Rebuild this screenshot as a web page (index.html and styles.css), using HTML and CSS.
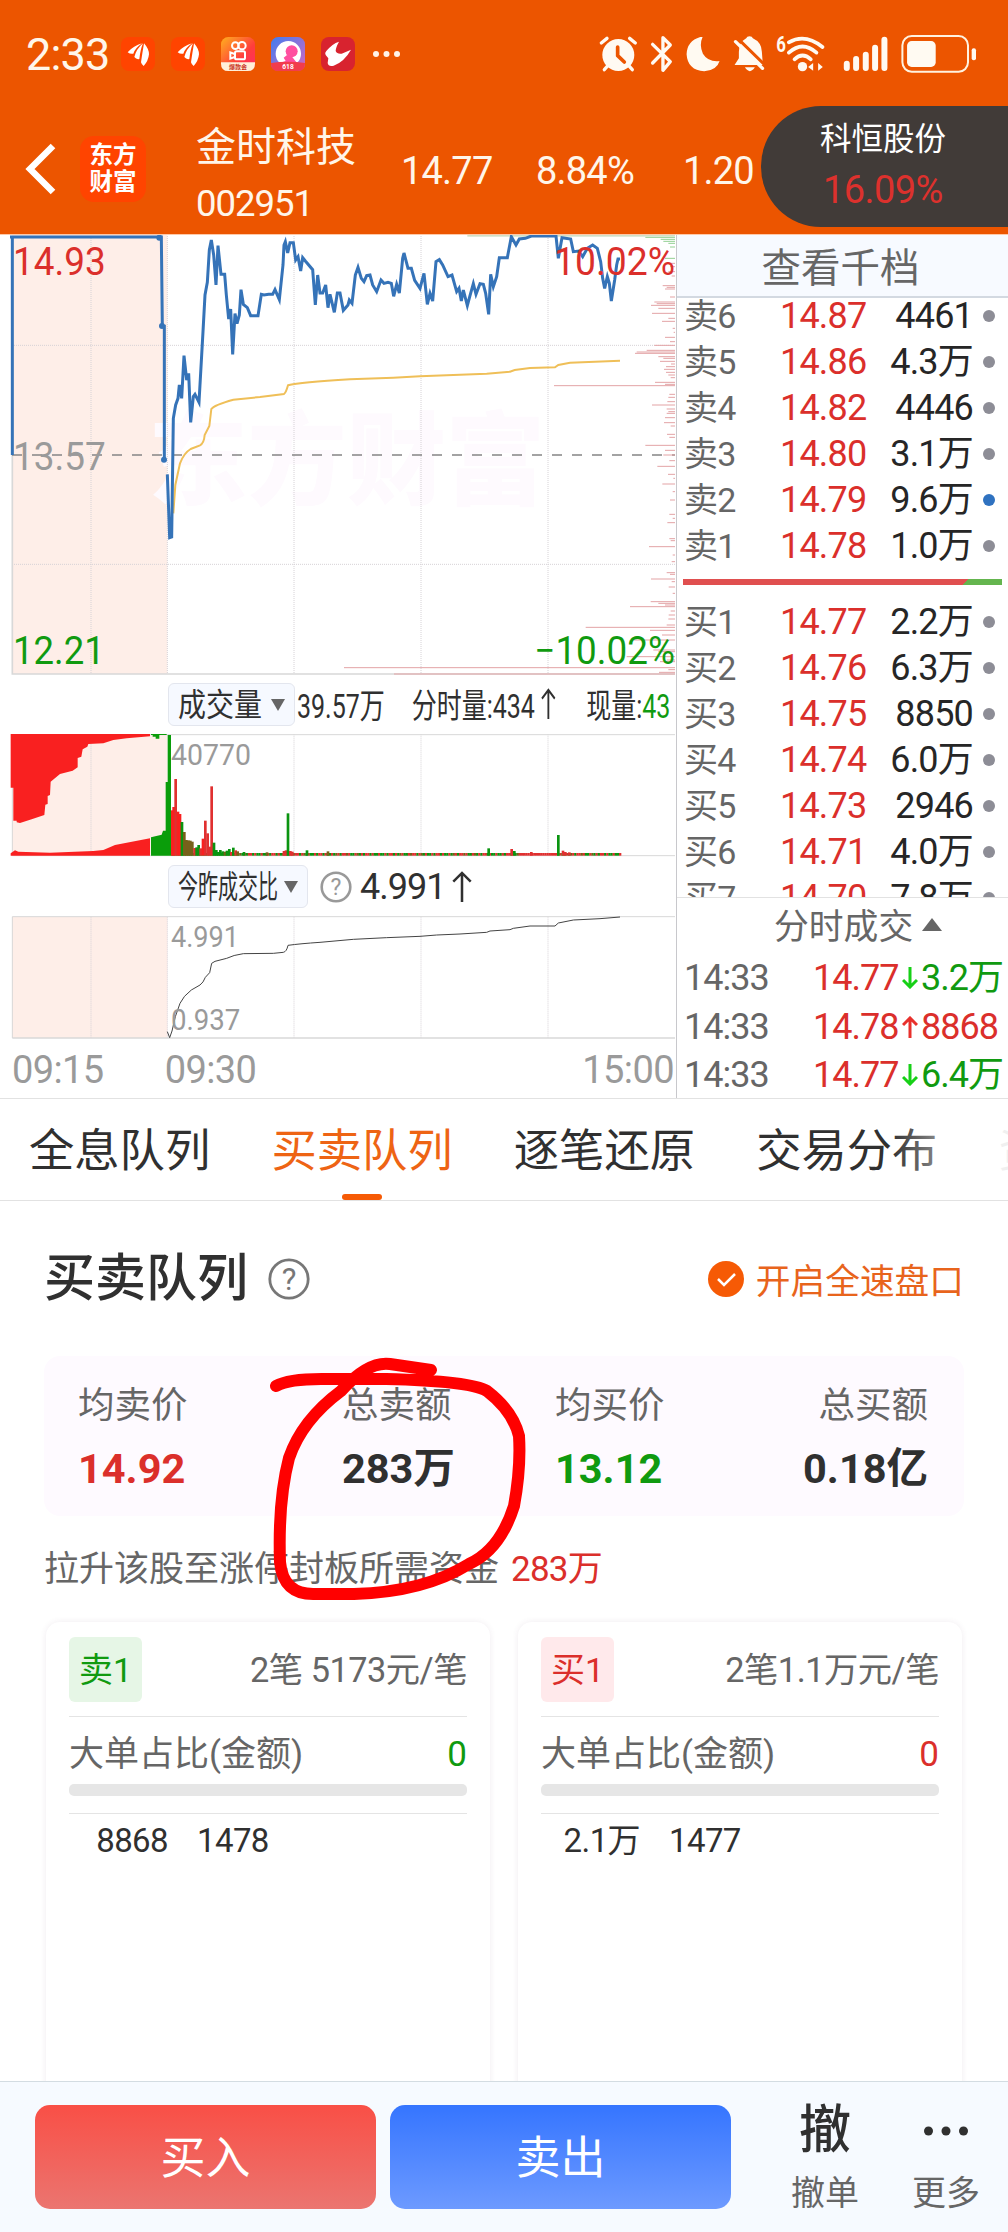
FILE: index.html
```html
<!DOCTYPE html>
<html lang="zh-CN">
<head>
    <meta charset="UTF-8">
    <meta name="viewport" content="width=device-width, initial-scale=1.0">
    <title>金时科技 002951</title>
    <link rel="stylesheet" href="styles.css">
</head>
<body>
    <header class="header">
        <div class="status-bar">
            <span class="clock">2:33</span>
            <div class="notices">
                <svg class="app-icon" viewBox="0 0 102 102"><rect width="102" height="102" rx="24" fill="#ff4400"/><path fill="#fff" d="M20 46Q38 26 63 19Q42 34 37 50Q28 52 20 46ZM40 60Q46 36 66 19Q58 38 55 66Q46 68 40 60ZM60 76Q64 48 69 19Q84 36 84 52Q82 72 68 87Q62 83 60 76Z"/></svg>
                <svg class="app-icon" viewBox="0 0 102 102"><rect width="102" height="102" rx="24" fill="#ff4400"/><path fill="#fff" d="M20 46Q38 26 63 19Q42 34 37 50Q28 52 20 46ZM40 60Q46 36 66 19Q58 38 55 66Q46 68 40 60ZM60 76Q64 48 69 19Q84 36 84 52Q82 72 68 87Q62 83 60 76Z"/></svg>
                <svg class="app-icon" viewBox="0 0 102 102">
                    <defs><linearGradient id="ks" x1="0" y1="0" x2="1" y2="1"><stop offset="0" stop-color="#ffb01e"/><stop offset=".6" stop-color="#ff3d3d"/><stop offset="1" stop-color="#ff2a6a"/></linearGradient></defs>
                    <rect width="102" height="102" rx="22" fill="url(#ks)"/>
                    <g fill="none" stroke="#fff" stroke-width="6"><circle cx="43" cy="26" r="10"/><circle cx="63" cy="26" r="11"/><rect x="42" y="43" width="30" height="24" rx="5"/><path d="M41 51L28 46V65L41 60"/></g>
                    <path fill="#fff0d8" d="M0 76H102V80Q102 102 80 102H22Q0 102 0 80Z"/>
                    <text x="51" y="96" font-size="18" font-weight="700" text-anchor="middle" fill="#c8321e">爆款会</text>
                </svg>
                <svg class="app-icon" viewBox="0 0 102 102">
                    <defs><linearGradient id="mm" x1="0" y1="0" x2="1" y2="1"><stop offset="0" stop-color="#3f7df0"/><stop offset="1" stop-color="#d667c0"/></linearGradient></defs>
                    <rect width="102" height="102" rx="22" fill="url(#mm)"/>
                    <circle cx="52" cy="50" r="38" fill="#fff"/>
                    <circle cx="62" cy="43" r="18" fill="#ff4fa0"/><path fill="#ff4fa0" d="M48 54L38 62L44 72L26 78H78L62 58Z"/>
                    <path fill="#f23c4c" d="M0 78Q50 70 102 78V80Q102 102 80 102H22Q0 102 0 80Z"/>
                    <text x="51" y="97" font-size="20" font-weight="700" text-anchor="middle" fill="#fff">618</text>
                </svg>
                <svg class="app-icon" viewBox="0 0 102 102"><rect width="102" height="102" rx="24" fill="#d8232f"/><path fill="#fff" d="M54 14Q34 20 16 42Q10 48 14 54L22 64L20 78Q22 90 38 86Q70 74 90 38L62 50Q48 52 44 42Q44 32 54 14Z"/></svg>
                <svg class="more-dots" viewBox="0 0 27 6"><g fill="#fff3e8"><circle cx="3" cy="3" r="3"/><circle cx="13.5" cy="3" r="3"/><circle cx="24" cy="3" r="3"/></g></svg>
            </div>
            <svg class="sys-icons" viewBox="280 93 1150 135">
                <g fill="#fffaf2" stroke-linecap="round" stroke-linejoin="round">
                    <!-- alarm -->
                    <circle cx="344" cy="162" r="48"/>
                    <path fill="none" stroke="#fffaf2" stroke-width="10" d="M293 126L310 112M395 126L378 112M312 195L302 206M376 195L386 206"/>
                    <path fill="none" stroke="#ec5500" stroke-width="11" d="M342 138V164L362 183"/>
                    <!-- bluetooth -->
                    <path fill="none" stroke="#fffaf2" stroke-width="10" d="M447 130L500 182L478 208V110L500 132L447 186"/>
                    <!-- moon -->
                    <path d="M590 108Q550 120 549 160Q552 208 602 211Q640 208 648 180Q614 184 598 158Q586 132 597 108Z"/>
                    <!-- muted bell -->
                    <path d="M738 106Q746 106 748 112Q774 124 775 152L778 192H693L706 172V152Q706 124 728 112Q730 106 738 106ZM724 199H754Q739 222 724 199Z"/>
                    <path fill="none" stroke="#ec5500" stroke-width="9" d="M700 110L786 194"/>
                    <path fill="none" stroke="#fffaf2" stroke-width="10" d="M696 122L777 202"/>
                    <!-- wifi -->
                    <g fill="none" stroke="#fffaf2" stroke-width="11"><path d="M856 124Q905 96 957 138"/><path d="M856 155Q897 118 939 155"/><path d="M873 175Q897 152 922 175"/></g>
                    <circle cx="897" cy="197" r="14"/>
                    <path d="M929 186V209L914 198ZM944 186V209L958 198Z"/>
                    <text x="818" y="152" font-size="66" font-weight="700" textLength="29" lengthAdjust="spacingAndGlyphs">6</text>
                    <!-- signal -->
                    <g fill="none" stroke="#fffaf2" stroke-width="18"><path d="M1030 188V201M1058 174V201M1087 161V201M1115 140V201M1143 116V201"/></g>
                    <!-- battery -->
                    <rect x="1197" y="105" width="197" height="107" rx="28" fill="none" stroke="#fff3e0" stroke-width="6"/>
                    <rect x="1211" y="120" width="86" height="78" rx="14"/>
                    <rect x="1405" y="142" width="13" height="36" rx="6"/>
                </g>
            </svg>
        </div>
        <div class="nav">
            <svg class="back" viewBox="0 0 32 54"><path d="M28 4L5 27L28 50"/></svg>
            <div class="logo"><span>东方</span><span>财富</span></div>
            <div class="stock">
                <div class="stock-name">金时科技</div>
                <div class="stock-code">002951</div>
            </div>
            <span class="quote price">14.77</span>
            <span class="quote percent">8.84%</span>
            <span class="quote change">1.20</span>
        </div>
        <div class="float-pill">
            <div class="pill-name">科恒股份</div>
            <div class="pill-value">16.09%</div>
        </div>
    </header>

    <main>
        <section class="market">
            <div class="charts">
                <svg class="chart-price" viewBox="0 30 2028 1320">
                    <rect x="36" y="30" width="466" height="1317" fill="#feeee8"/>
                    <text class="watermark" x="445" y="815" textLength="1190" lengthAdjust="spacingAndGlyphs">东方财富</text>
                    <path class="grid" d="M36 361H2025M36 1018H2025M273 33V1345M502 33V1345M882 33V1345M1263 33V1345M1644 33V1345"/>
                    <path class="frame" d="M37 33V1347H2025"/>
                    <path class="zero" d="M36 690H2025"/>
                    <g id="depth"></g>
                    <path class="avg" d="M520 865L526 780L540 715Q552 684 572 672L600 661Q612 655 614 630L628 603L634 552Q642 540 700 524L780 516L852 507Q858 503 864 481Q900 472 1050 463L1180 458L1260 454L1460 446L1530 440L1544 435L1590 429L1665 427L1675 420L1710 413L1860 407"/>
                    <path class="line" d="M30 36H484L487 304L493 304V704M37 36V690"/>
                    <circle cx="478" cy="38" r="9" class="dot"/><circle cx="486" cy="303" r="9" class="dot"/><circle cx="492" cy="704" r="9" class="dot"/>
                    <path class="line" d="M502 748L509 938L515 936L520 580L527 540L534 520L538 480L545 520L552 392L560 465L566 445L572 592L580 515L585 508L597 532L609 320L615 210L622 172L628 75L634 45L641 90L648 180L654 62L663 148H674L679 210L686 282L692 252L698 388L705 266L711 296L718 270L723 194L730 238L742 248L752 272H774L784 208L792 210L806 208L818 208L825 194L838 224L849 120L852 60L856 50L863 84L870 53H880L887 105L894 95L902 138L908 98L916 108L938 134L946 240L953 150L960 204L968 204L977 180L984 248L990 208L1003 262L1012 204H1020L1030 256L1044 240L1048 225L1056 235L1066 150L1074 127L1084 160L1092 170L1100 152L1110 150L1118 180L1130 200L1143 165L1152 175L1164 172L1174 175L1181 214L1190 178L1198 204L1208 100L1212 84L1224 130H1234L1244 166L1260 190L1272 145L1282 238L1290 205L1298 228L1308 110L1318 104L1328 120L1344 155L1356 150L1370 200L1377 190L1384 228L1390 195L1402 242L1410 212L1420 176L1428 208L1440 176L1450 178L1457 205L1466 268L1472 148L1480 185L1490 155L1498 98H1522L1534 35L1548 60L1558 42L1576 40L1594 33H1668L1675 100L1686 38L1712 42L1720 80L1736 78L1748 95L1762 70L1778 60L1792 70L1802 110L1808 160L1814 190L1822 155L1828 175L1834 228L1844 165L1850 120L1854 102L1860 102"/>
                    <text class="c-red big" x="39" y="150" textLength="278" lengthAdjust="spacingAndGlyphs">14.93</text>
                    <text class="c-grey big" x="39" y="735" textLength="278" lengthAdjust="spacingAndGlyphs">13.57</text>
                    <text class="c-green big" x="39" y="1317" textLength="275" lengthAdjust="spacingAndGlyphs">12.21</text>
                    <text class="c-red big" x="1662" y="150" textLength="363" lengthAdjust="spacingAndGlyphs">10.02%</text>
                    <text class="c-green big" x="1603" y="1317" textLength="422" lengthAdjust="spacingAndGlyphs">−10.02%</text>
                </svg>

                <div class="toolbar volume-bar">
                    <span class="select"><span class="select-text wide">成交量</span><i class="caret-down"></i></span>
                    <div class="narrow">
                        <span class="vol-total">39.57万</span>
                        <span class="vol-minute">分时量:434<svg class="arrow-up" viewBox="0 0 20 32"><path d="M10 32V2M1 11L10 2L19 11"/></svg></span>
                        <span>现量:<b class="green">43</b></span>
                    </div>
                </div>

                <svg class="chart-sub" viewBox="0 192 2028 369">
                    <rect x="36" y="193" width="466" height="364" fill="#feeee8"/>
                    <path class="grid" d="M273 193V557M882 193V557M1263 193V557M1644 193V557"/>
                    <path class="frame thin" d="M37 557V194H2025M37 557H2025"/>
                    <path fill="#f92020" d="M32 192H450V199L380 205L340 210L310 220L265 222L262 230L248 238L244 260L233 264V292L218 302L180 312L152 335L150 375L143 378V402L136 404L133 435L95 448L60 459L50 457V452H40V353H32ZM32 557V550L45 541L55 545L150 548L280 543L310 540L345 525L450 505V557Z"/>
                    <path fill="#0a9d0a" d="M453 192H500V195H478V206H467V200H458V195H453ZM453 557V502L485 494L489 482H497V336H503V195H513V557Z"/>
                    <g id="volume"></g>
                    <text class="c-grey small" x="513" y="284" textLength="240" lengthAdjust="spacingAndGlyphs">40770</text>
                </svg>

                <div class="toolbar ratio-bar">
                    <span class="select ratio-select"><span class="select-text slim">今昨成交比</span><i class="caret-down"></i></span>
                    <svg class="help-small" viewBox="0 0 32 32"><circle cx="16" cy="16" r="14.3"/><text x="16" y="24" text-anchor="middle">?</text></svg>
                    <span class="ratio-value">4.991</span>
                    <svg class="arrow-up tall" viewBox="0 0 20 32"><path d="M10 32V2M1 11L10 2L19 11"/></svg>
                </div>

                <svg class="chart-sub" viewBox="0 738 2028 369">
                    <rect x="36" y="740" width="466" height="364" fill="#feeee8"/>
                    <path class="grid" d="M273 740V1103M502 740V1103M882 740V1103M1263 740V1103M1644 740V1103"/>
                    <path class="frame thin" d="M37 1104V740H2025"/>
                    <path class="frame" d="M37 1104H2025"/>
                    <path class="ratio" d="M502 1085L509 1103L516 1083L526 1040L540 1000Q550 978 574 960L600 945Q610 938 616 922L629 908L635 880L645 874L680 865Q700 855 730 851L820 850L850 847Q860 845 864 826Q900 821 960 817L1060 808L1160 803L1260 799L1310 795L1380 792L1460 787L1470 783L1530 779L1540 775L1590 768H1665L1675 759L1720 750L1800 746L1860 741"/>
                    <text class="c-grey small" x="513" y="830" textLength="204" lengthAdjust="spacingAndGlyphs">4.991</text>
                    <text class="c-grey small" x="513" y="1079" textLength="208" lengthAdjust="spacingAndGlyphs">0.937</text>
                </svg>

                <div class="time-axis"><span>09:15</span><span class="open">09:30</span><span class="close">15:00</span></div>
            </div>

            <div class="book">
                <div class="book-head">查看千档</div>
                <div class="book-list">
                    <div class="level first"><span>卖6</span><span class="red">14.87</span><span class="qty">4461</span><i></i></div>
                    <div class="level"><span>卖5</span><span class="red">14.86</span><span class="qty">4.3万</span><i></i></div>
                    <div class="level"><span>卖4</span><span class="red">14.82</span><span class="qty">4446</span><i></i></div>
                    <div class="level"><span>卖3</span><span class="red">14.80</span><span class="qty">3.1万</span><i></i></div>
                    <div class="level"><span>卖2</span><span class="red">14.79</span><span class="qty">9.6万</span><i class="blue"></i></div>
                    <div class="level"><span>卖1</span><span class="red">14.78</span><span class="qty">1.0万</span><i></i></div>
                    <div class="balance"></div>
                    <div class="level"><span>买1</span><span class="red">14.77</span><span class="qty">2.2万</span><i></i></div>
                    <div class="level"><span>买2</span><span class="red">14.76</span><span class="qty">6.3万</span><i></i></div>
                    <div class="level"><span>买3</span><span class="red">14.75</span><span class="qty">8850</span><i></i></div>
                    <div class="level"><span>买4</span><span class="red">14.74</span><span class="qty">6.0万</span><i></i></div>
                    <div class="level"><span>买5</span><span class="red">14.73</span><span class="qty">2946</span><i></i></div>
                    <div class="level"><span>买6</span><span class="red">14.71</span><span class="qty">4.0万</span><i></i></div>
                    <div class="level"><span>买7</span><span class="red">14.70</span><span class="qty">7.8万</span><i></i></div>
                </div>
                <div class="deals-head">分时成交<i class="caret-up"></i></div>
                <div class="deal"><span>14:33</span><span class="deal-price">14.77</span><svg class="arrow-deal down" viewBox="0 0 16 22"><path d="M8 0V20M1 13L8 20L15 13"/></svg><span class="green">3.2万</span></div>
                <div class="deal"><span>14:33</span><span class="deal-price">14.78</span><svg class="arrow-deal up" viewBox="0 0 16 22"><path d="M8 22V2M1 9L8 2L15 9"/></svg><span class="red">8868</span></div>
                <div class="deal"><span>14:33</span><span class="deal-price">14.77</span><svg class="arrow-deal down" viewBox="0 0 16 22"><path d="M8 0V20M1 13L8 20L15 13"/></svg><span class="green">6.4万</span></div>
            </div>
        </section>

        <nav class="tabs">
            <span class="tab">全息队列</span>
            <span class="tab active">买卖队列</span>
            <span class="tab">逐笔还原</span>
            <span class="tab">交易分布</span>
            <span class="tab">资金</span>
        </nav>

        <section class="queue">
            <div class="queue-head">
                <h2>买卖队列</h2>
                <svg class="help" viewBox="0 0 42 42"><circle cx="21" cy="21" r="19.2"/><text x="21" y="32" text-anchor="middle">?</text></svg>
                <span class="fast"><svg class="check" viewBox="0 0 36 36"><circle cx="18" cy="18" r="18"/><path d="M10 18L16 24L27 13"/></svg>开启全速盘口</span>
            </div>

            <div class="summary">
                <div><p>均卖价</p><strong class="red">14.92</strong></div>
                <div><p>总卖额</p><strong>283万</strong></div>
                <div><p>均买价</p><strong class="green">13.12</strong></div>
                <div class="last"><p>总买额</p><strong>0.18亿</strong></div>
                <svg class="scribble" viewBox="260 1345 280 265"><path d="M276 1386Q290 1378 330 1379L386 1379Q470 1381 487 1391Q513 1411 519 1436Q521 1468 514 1506Q500 1550 469 1564Q424 1592 354 1594H315Q283 1595 280 1562Q278 1500 289 1458Q302 1420 341 1391Q368 1361 390 1364L431 1370"/></svg>
            </div>

            <p class="hint">拉升该股至涨停封板所需资金<span>283万</span></p>

            <div class="cards">
                <div class="card">
                    <div class="card-top"><span class="badge sell">卖1</span><span class="info">2笔 5173元/笔</span></div>
                    <div class="card-ratio"><span>大单占比(金额)</span><span class="green">0</span></div>
                    <div class="progress"></div>
                    <div class="orders"><span>8868</span><span>1478</span></div>
                </div>
                <div class="card">
                    <div class="card-top"><span class="badge buy">买1</span><span class="info">2笔1.1万元/笔</span></div>
                    <div class="card-ratio"><span>大单占比(金额)</span><span class="red">0</span></div>
                    <div class="progress"></div>
                    <div class="orders"><span>2.1万</span><span>1477</span></div>
                </div>
            </div>
        </section>
    </main>

    <footer class="footer">
        <button class="trade buy-btn">买入</button>
        <button class="trade sell-btn">卖出</button>
        <div class="action cancel"><b>撤</b><span>撤单</span></div>
        <div class="action"><b><svg class="dots" viewBox="0 0 46 12"><circle cx="5.5" cy="6" r="4.5"/><circle cx="23" cy="6" r="4.5"/><circle cx="40.5" cy="6" r="4.5"/></svg></b><span>更多</span></div>
    </footer>

    <script>
        const NS = "http://www.w3.org/2000/svg";

        function addRect(parent, x, y, width, height, fill) {
            const rect = document.createElementNS(NS, "rect");
            rect.setAttribute("x", x);
            rect.setAttribute("y", y);
            rect.setAttribute("width", width);
            rect.setAttribute("height", height);
            rect.setAttribute("fill", fill);
            parent.appendChild(rect);
        }

        // traded volume at each price: [y, length]
        const depth = [
            [115,20],[125,15],[140,20],[153,10],[182,37],[187,25],[192,30],[216,15],[231,62],[236,55],[241,72],[250,50],
            [265,69],[280,20],[289,39],[310,7],[322,4],[337,30],[350,15],[361,62],[376,85],[381,115],[385,120],[395,50],[400,35],
            [409,45],[417,12],[425,27],[433,33],[442,27],[450,20],[458,13],[472,60],[478,30],[482,363],[508,17],[517,20],
            [530,23],[540,69],[552,25],[560,20],[565,25],[578,30],[593,33],[603,13],[628,24],[637,17],[661,89],[676,30],
            [690,35],[707,17],[724,53],[748,21],[760,5],[777,38],[800,7],[825,15],[868,17],[880,7],[893,23],[941,17],[947,13],
            [965,78],[990,7],[1010,10],[1043,25],[1048,15],[1062,72],[1070,10],[1086,19],[1105,7],[1130,73],[1135,50],
            [1140,30],[1145,135],[1158,13],[1170,19],[1182,20],[1200,25],[1207,268],[1216,75],[1230,39],[1245,125],
            [1275,65],[1280,50],[1295,145],[1305,25],[1310,45],[1328,993],[1334,20],[1342,48],[1347,843]
        ];
        const depthBox = document.getElementById("depth");
        depth.forEach(([y, len]) => addRect(depthBox, 2025 - len, y - 1.5, len, 3, "#e3a3a6"));
        [[37,89],[43,43],[49,35],[55,20],[66,15],[100,30]].forEach(([y, len]) => addRect(depthBox, 2025 - len, y - 1.5, len, 3, "#93d093"));
        addRect(depthBox, 1402, 30, 623, 5, "#cfe0c6");

        // minute volume: [x, top, colour]
        const colours = { r: "#e03030", R: "#f92020", g: "#0a9410", o: "#77601a" };
        const bars = [
            [513,421,"R"],[517,411,"R"],[523,327,"r"],[530,425,"R"],[536,432,"R"],[542,456,"g"],[549,486,"o"],[555,510,"o"],
            [561,511,"o"],[567,512,"o"],[573,515,"o"],[580,534,"r"],[586,532,"g"],[592,525,"g"],[598,535,"r"],[605,506,"R"],
            [612,452,"r"],[619,490,"r"],[625,530,"r"],[631,349,"r"],[638,518,"g"],[645,540,"g"],[651,546,"g"],[657,540,"g"],
            [664,544,"g"],[671,545,"o"],[677,542,"g"],[684,537,"g"],[690,546,"r"],[696,533,"g"],[703,541,"r"],[709,544,"o"],
            [728,546,"g"],[797,547,"o"],[848,543,"r"],[854,541,"r"],[860,430,"g"],[867,543,"r"],[873,545,"r"],[917,541,"g"],
            [980,544,"o"],[1462,535,"g"],[1531,537,"r"],[1539,543,"g"],[1590,546,"r"],[1671,495,"g"],[1685,542,"r"],[1692,546,"r"],[1704,547,"r"]
        ];
        const volumeBox = document.getElementById("volume");
        for (let x = 513, i = 0; x < 1860; x += 6.4, i++) {
            const c = (x > 1560 && x < 1670) || (x > 720 && (i * 7) % 11 > 5) ? "r" : (i % 5 === 2 ? "o" : "g");
            addRect(volumeBox, x, 549, 7, 8, colours[c]);
        }
        bars.forEach(([x, top, c]) => addRect(volumeBox, x, top, 8, 557 - top, colours[c]));
    </script>
</body>
</html>
```

FILE: styles.css
```css
* {
    box-sizing: border-box;
}
body {
    margin: 0;
    width: 1008px;
    height: 2232px;
    display: flex;
    flex-direction: column;
    overflow: hidden;
    background: #fff;
    color: #303030;
    font-family: Roboto, "Noto Sans CJK SC", sans-serif;
}
svg {
    display: block;
    flex: none;
}
svg text {
    font-family: Roboto, "Noto Sans CJK SC", sans-serif;
}
p, h2 {
    margin: 0;
}
main {
    flex: 1;
    min-height: 0;
    overflow: hidden;
}
.red {
    color: #db2f2b;
}
.green {
    color: #109a10;
}

/* header */
.header {
    position: relative;
    height: 235px;
    background: #ec5500;
    color: #fff6ea;
    border-bottom: 1px solid #ffc9a8;
}
.status-bar {
    display: flex;
    align-items: center;
    height: 108px;
    padding: 0 28px 0 26px;
}
.clock {
    width: 95px;
    font-size: 45px;
    letter-spacing: -.8px;
}
.notices {
    display: flex;
    align-items: center;
    gap: 16px;
}
.app-icon {
    width: 34px;
    height: 34px;
}
.more-dots {
    width: 27px;
    height: 6px;
    margin-left: 2px;
}
.sys-icons {
    width: 383px;
    height: 45px;
    margin-left: auto;
}
.nav {
    display: flex;
    align-items: center;
    height: 126px;
    padding-left: 25px;
}
.back {
    width: 32px;
    height: 54px;
    margin-top: -4px;
    fill: none;
    stroke: #fff;
    stroke-width: 6.5;
}
.logo {
    display: flex;
    flex-direction: column;
    justify-content: center;
    width: 66px;
    height: 66px;
    margin-top: -4px;
    margin-left: 23px;
    border-radius: 14px;
    background: #ff4400;
    color: #fff;
    font-size: 23.5px;
    font-weight: 700;
    line-height: 27px;
    text-align: center;
}
.stock {
    width: 205px;
    margin-left: 50px;
    padding-top: 8px;
}
.stock-name {
    height: 56px;
    font-size: 40px;
    line-height: 56px;
}
.stock-code {
    height: 54px;
    font-size: 36.5px;
    line-height: 56px;
    letter-spacing: -1px;
}
.quote {
    font-size: 38px;
    letter-spacing: -.8px;
}
.price {
    width: 135px;
}
.percent {
    width: 147px;
}
.float-pill {
    position: absolute;
    top: 106px;
    right: 0;
    width: 247px;
    height: 121px;
    padding: 8px 0 0 59px;
    border-radius: 60px 0 0 60px;
    background: #413b38;
    line-height: 51px;
}
.pill-name {
    color: #fff;
    font-size: 31.5px;
}
.pill-value {
    padding-left: 3px;
    color: #dc312d;
    font-size: 38px;
    letter-spacing: -.6px;
}

/* charts */
.market {
    display: flex;
    height: 864px;
    border-bottom: 1px solid #e2e2e2;
}
.charts {
    width: 677px;
    border-right: 1px solid #c8c8cc;
}
.chart-price {
    width: 676px;
    height: 440px;
}
.chart-sub {
    width: 676px;
    height: 123px;
}
.grid {
    fill: none;
    stroke: #d6d2d6;
    stroke-width: 3;
    stroke-dasharray: 3 3;
}
.frame {
    fill: none;
    stroke: #d8d8d8;
    stroke-width: 5;
}
.thin {
    stroke-width: 3;
}
.zero {
    stroke: #858585;
    stroke-width: 5;
    stroke-dasharray: 30 30;
}
.watermark {
    fill: #fefafe;
    font-size: 305px;
    font-weight: 900;
}
.avg {
    fill: none;
    stroke: #efbf58;
    stroke-width: 6;
}
.line {
    fill: none;
    stroke: #3573b8;
    stroke-width: 9;
}
.dot {
    fill: #3573b8;
}
.ratio {
    fill: none;
    stroke: #444;
    stroke-width: 3;
}
.big {
    font-size: 116px;
}
.small {
    font-size: 91px;
}
.c-red {
    fill: #db2f2b;
}
.c-grey {
    fill: #9a9a9a;
}
.c-green {
    fill: #109a10;
}
.toolbar {
    display: flex;
    align-items: center;
    height: 59px;
    padding-left: 168px;
}
.select {
    display: flex;
    align-items: center;
    justify-content: space-between;
    flex: none;
    width: 127px;
    height: 43px;
    padding: 0 9px;
    border: 1px solid #e3e6ee;
    border-radius: 6px;
    background: #f6f9ff;
}
.ratio-select {
    width: 140px;
}
.select-text {
    flex: none;
    font-size: 32px;
    line-height: 42px;
    white-space: nowrap;
    transform-origin: left;
}
.wide {
    width: 84px;
    transform: scaleX(.875);
}
.slim {
    width: 100px;
    transform: scaleX(.625);
}
.caret-down {
    border: 7px solid transparent;
    border-top: 12px solid #666;
    border-bottom: 0;
}
.narrow {
    display: flex;
    flex: none;
    width: 508px;
    margin-left: 2px;
    margin-top: -2px;
    font-size: 34px;
    white-space: nowrap;
    transform: scaleX(.735);
    transform-origin: left;
}
.narrow b {
    font-weight: 400;
}
.vol-total {
    width: 157px;
}
.vol-minute {
    display: flex;
    align-items: center;
    width: 239px;
}
.arrow-up {
    width: 20px;
    height: 31px;
    margin-left: 8px;
    fill: none;
    stroke: #303030;
    stroke-width: 2.6;
}
.help-small {
    width: 32px;
    height: 32px;
    margin-left: 12px;
    fill: none;
    stroke: #999;
    stroke-width: 2.6;
}
.help-small text {
    fill: #999;
    stroke: none;
    font-size: 23px;
}
.ratio-value {
    margin-left: 8px;
    font-size: 36px;
    letter-spacing: -1px;
}
.tall {
    margin-left: 7px;
}
.time-axis {
    display: flex;
    height: 59px;
    padding: 0 2px 0 12px;
    color: #9a9a9a;
    font-size: 38px;
    line-height: 63px;
    letter-spacing: -.6px;
}
.open {
    margin-left: 61px;
}
.close {
    margin-left: auto;
}

/* order book */
.book {
    flex: 1;
    color: #666;
}
.book-head {
    height: 63px;
    padding-right: 4px;
    border-bottom: 2px solid #d3d9e1;
    background: #f7faff;
    font-size: 39.5px;
    line-height: 67px;
    text-align: center;
}
.book-list {
    height: 600px;
    overflow: hidden;
    border-bottom: 1px solid #e2e2e2;
}
.level {
    display: grid;
    grid-template-columns: 96px 100px 93px 12px;
    align-items: center;
    height: 46px;
    padding-left: 7px;
    font-size: 36px;
    letter-spacing: -.8px;
    line-height: 48px;
}
.level span:first-child {
    font-size: 34px;
}
.first {
    margin-top: -6px;
}
.qty {
    color: #262626;
    text-align: right;
}
.level i {
    width: 12px;
    height: 12px;
    margin-left: 10px;
    border-radius: 50%;
    background: #8d8d96;
}
.level .blue {
    background: #2f72c0;
}
.balance {
    height: 6px;
    margin: 11px 6px 13px;
    background: linear-gradient(135deg, #e04f4f 0 88%, #64b54e 88%);
}
.deals-head {
    display: flex;
    align-items: center;
    height: 56px;
    padding: 0 0 4px 97px;
    font-size: 34.8px;
}
.caret-up {
    margin-left: 9px;
    border: 10px solid transparent;
    border-top: 0;
    border-bottom: 13px solid #666;
}
.deal {
    display: flex;
    align-items: center;
    height: 48.5px;
    padding-left: 7px;
    font-size: 36px;
    letter-spacing: -1px;
    line-height: 48px;
}
.deal span:first-child {
    width: 129px;
}
.deal-price {
    width: 89px;
    color: #db2f2b;
}
.arrow-deal {
    width: 16px;
    height: 22px;
    margin-right: 3px;
    fill: none;
    stroke-width: 3;
}
.down {
    stroke: #17d017;
}
.up {
    stroke: #e8302c;
}

/* tabs */
.tabs {
    position: relative;
    display: flex;
    gap: 61.2px;
    height: 102px;
    padding-left: 29px;
    overflow: hidden;
    border-bottom: 1px solid #e2e2e2;
    font-size: 45.3px;
    line-height: 105px;
    white-space: nowrap;
}
.tabs::after {
    content: "";
    position: absolute;
    top: 0;
    right: 0;
    width: 118px;
    height: 100px;
    background: linear-gradient(90deg, rgba(255, 255, 255, 0), rgba(255, 255, 255, .93) 90%);
}
.tab {
    position: relative;
    flex: none;
}
.active {
    color: #ee6414;
}
.active::after {
    content: "";
    position: absolute;
    left: 71px;
    bottom: 0;
    width: 40px;
    height: 6px;
    border-radius: 3px;
    background: #f65a05;
}

/* queue */
.queue {
    padding: 0 44px;
}
.queue-head {
    display: flex;
    align-items: center;
    height: 155px;
}
.queue-head h2 {
    font-size: 51px;
    font-weight: 500;
    line-height: 158px;
}
.help {
    width: 42px;
    height: 42px;
    margin-left: 20px;
    fill: none;
    stroke: #777;
    stroke-width: 2.8;
}
.help text {
    fill: #777;
    stroke: none;
    font-size: 31px;
}
.fast {
    display: flex;
    align-items: center;
    gap: 12px;
    margin-left: auto;
    color: #e8641c;
    font-size: 34.7px;
}
.check {
    width: 36px;
    height: 36px;
    fill: #f65a05;
}
.check path {
    fill: none;
    stroke: #fff;
    stroke-width: 2.5;
}
.summary {
    position: relative;
    display: grid;
    grid-template-columns: 264px 213px 200px 1fr;
    height: 160px;
    padding: 19px 36px 0 34px;
    border-radius: 16px;
    background: #fefaff;
}
.summary p {
    color: #666;
    font-size: 36.5px;
    line-height: 62px;
}
.summary strong {
    display: block;
    font-size: 41.5px;
    line-height: 64px;
    white-space: nowrap;
}
.last {
    text-align: right;
}
.scribble {
    position: absolute;
    left: 216px;
    top: -11px;
    width: 280px;
    height: 265px;
    z-index: 2;
    fill: none;
    stroke: #ff0000;
    stroke-width: 12;
    stroke-linecap: round;
}
.hint {
    margin-top: 27px;
    margin-bottom: -1px;
    color: #666;
    font-size: 35px;
    line-height: 54px;
    white-space: nowrap;
}
.hint span {
    margin-left: 12px;
    color: #db2f2b;
    letter-spacing: -.8px;
}
.cards {
    display: grid;
    grid-template-columns: 444px 444px;
    gap: 28px;
    padding: 26px 2px 0;
}
.card {
    height: 520px;
    padding: 15px 23px;
    border-radius: 14px;
    background: #fff;
    box-shadow: 0 0 6px rgba(90, 40, 90, .09);
}
.card-top {
    display: flex;
    justify-content: space-between;
    height: 80px;
    border-bottom: 1px solid #e4e4e4;
    line-height: 67px;
}
.badge {
    width: 73px;
    height: 65px;
    border-radius: 6px;
    font-size: 34px;
    text-align: center;
}
.sell {
    background: #e6f6e6;
    color: #109a10;
}
.buy {
    background: #ffe9eb;
    color: #db2f2b;
}
.info {
    color: #666;
    font-size: 34.3px;
    letter-spacing: -.5px;
}
.card-ratio {
    display: flex;
    justify-content: space-between;
    height: 67px;
    font-size: 35px;
    line-height: 75px;
}
.card-ratio span:first-child {
    color: #666;
}
.progress {
    height: 12px;
    border-radius: 5px;
    background: #e6e6e6;
}
.orders {
    display: flex;
    gap: 29px;
    margin-top: 17px;
    border-top: 1px solid #e4e4e4;
    font-size: 33px;
    line-height: 54px;
    letter-spacing: -.6px;
}
.orders span:first-child {
    width: 99px;
    text-align: right;
}

/* footer */
.footer {
    display: flex;
    flex: none;
    height: 151px;
    padding: 23px 28px 0 35px;
    border-top: 1px solid #d3dce2;
    background: #f6faff;
}
.trade {
    width: 341px;
    height: 104px;
    margin-right: 14px;
    padding: 0 0 5px;
    border: none;
    border-radius: 15px;
    color: #fff;
    font-family: inherit;
    font-size: 45px;
    cursor: pointer;
}
.buy-btn {
    background: linear-gradient(#f94f46, #eb7570);
}
.sell-btn {
    background: linear-gradient(#3575ff, #6d9aff);
}
.action {
    display: flex;
    flex-direction: column;
    align-items: center;
    width: 68px;
    font-size: 34px;
}
.cancel {
    margin-left: 46px;
    margin-right: 53px;
}
.action b {
    display: flex;
    align-items: center;
    height: 51px;
    font-size: 52px;
    font-weight: 500;
    line-height: 51px;
}
.action span {
    margin-top: 12px;
    color: #666;
    line-height: 50px;
}
.dots {
    width: 46px;
    height: 12px;
    fill: #303030;
}
```
